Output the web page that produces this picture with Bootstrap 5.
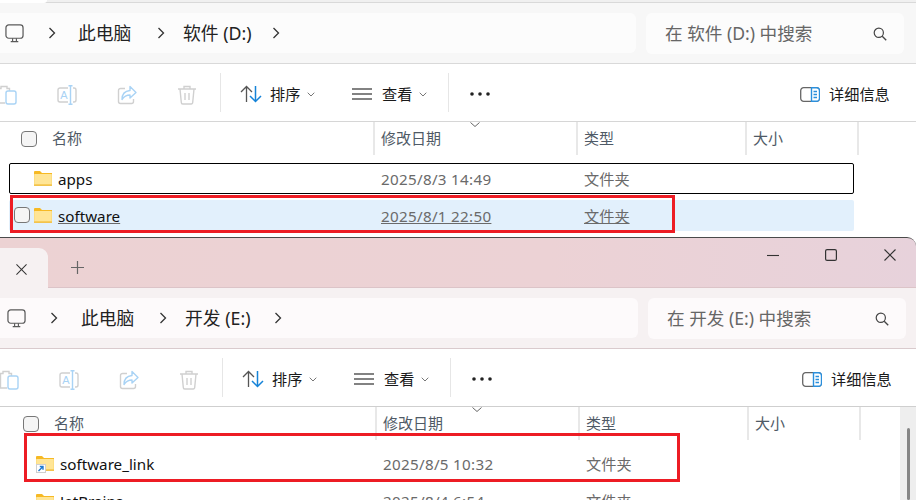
<!DOCTYPE html>
<html lang="zh-CN">
<head>
<meta charset="utf-8">
<title>文件资源管理器</title>
<link href="https://cdn.jsdelivr.net/npm/bootstrap@5.3.0/dist/css/bootstrap.min.css" rel="stylesheet">
<style>
html,body{height:500px;overflow:hidden;background:#fff;}
body{font-family:"Noto Sans","Noto Sans CJK SC",sans-serif;font-size:15px;color:#1a1a1a;width:916px;}
.xp-win{position:relative;overflow:hidden;--sh:0px;--band:#f7f7f7;--box:#fcfcfc;--line:#d9d9d9;}
.xp-a{height:237px;}
.xp-b{height:263px;--sh:2px;--band:#f6f1f2;--box:#fdfafb;--line:#d9cacd;}
.xp-top{height:3px;background:#f0f0f0;border-bottom:1px solid #d9d9d9;}
.xp-top i{display:block;width:47px;height:3px;background:#fff;border-bottom-right-radius:3px;}
.xp-tabs{height:51px;border-top:1px solid #4a4a4a;border-radius:0 9px 0 0;background:linear-gradient(90deg,#ecd2d3,#ecd2d5 60%,#e7d2db);border-bottom:1px solid #dcc4c8;}
.xp-tab{width:48px;height:40px;background:var(--band);border-radius:0 9px 0 0;margin-top:10px;padding-left:16px;}
.xp-plus{margin-left:23px;margin-top:23px;}
.xp-ctl{position:absolute;top:12px;}
.xp-band{height:61px;background:var(--band);border-bottom:1px solid var(--line);padding:10px 12px 10px 0;}
.xp-b .xp-band{padding-right:10px;}
.xp-addr{width:calc(636px + var(--sh));height:40px;background:var(--box);border-radius:0 6px 6px 0;padding-left:calc(5px + var(--sh));font-size:17.8px;color:#222;}
.xp-find{width:258px;height:41px;margin-left:10px;background:var(--box);border-radius:6px;padding:0 17px 0 19px;font-size:17.6px;color:#666;}
.xp-tools{height:58px;padding-left:var(--sh);padding-top:3px;border-bottom:1px solid #d6d6d6;background:#fff;font-size:15.2px;overflow:hidden;}
.xp-tools span{padding-top:1px;}
.xp-b .xp-tools{border-bottom-color:#cfcfcf;}
.xp-tb{width:60px;flex:none;}
.xp-tb-first{margin-left:-23px;}
.xp-div{width:1px;height:39px;background:#e6e6e6;flex:none;margin-top:-3px;}
.xp-tools .xp-div{padding:0;}
.xp-lab{width:30px;flex:none;}
.xp-head{height:33px;padding-left:var(--sh);color:#4f5a66;font-size:15px;}
.xp-hc{flex:none;height:33px;padding-left:6px;border-right:2px solid #e8e8e8;position:relative;}
.xp-h1{width:375px;padding-left:21px;}
.xp-h2{width:203px;}
.xp-h3{width:169px;}
.xp-h4{width:112px;}
.xp-check{display:block;width:16px;height:16px;flex:none;background:#f5f5f5;border:1px solid #777;border-radius:4px;}
.xp-sortmark{position:absolute;left:95px;top:0;}
.xp-rowwrap{margin-left:calc(9px + var(--sh));width:845px;}
.xp-file{display:grid;grid-template-columns:372px 203px 1fr;align-items:center;height:31px;border-radius:2px;color:#6a6a6a;font-size:15.2px;}
.xp-file > div + div,.xp-txt{padding-top:2px;}
.xp-b .xp-file > div + div,.xp-b .xp-txt{padding-top:0;}
.xp-stamp{letter-spacing:.3px;}
.xp-nm{color:#111;padding-left:25px;}
.xp-txt{margin-left:6px;}
.xp-box{outline:1.5px solid #000;outline-offset:-1.5px;height:31px;}
.xp-sel{background:#e2f0fc;text-decoration:underline;}
.xp-sel .xp-nm{padding-left:5px;}
.xp-sel .xp-check{margin-right:4px;}
.xp-mt6{margin-top:6px;}
.xp-mt8{margin-top:8px;}
.xp-mt9{margin-top:9px;}
.xp-red{position:absolute;border:3px solid #ed1c24;pointer-events:none;}
.xp-r1{left:10px;top:195px;width:665px;height:38px;}
.xp-r2{left:24px;top:196px;width:656px;height:49px;}
.xp-track{position:absolute;left:900px;top:170px;width:16px;height:93px;background:#eee;}
.xp-thumb{position:absolute;left:7px;top:21px;width:3px;height:72px;background:#868686;border-radius:2px;}
.xp-shortcut{position:relative;display:block;flex:none;width:18px;height:17px;}
</style>
</head>
<body>
<svg width="0" height="0" class="position-absolute">
<defs>
<symbol id="i-pc" viewBox="0 0 20 20"><rect x="1" y="1" width="18" height="14" rx="3" fill="none" stroke="#5a5a5a" stroke-width="1.3"/><path d="M6 18.5h8M8 15v3M12 15v3" fill="none" stroke="#5a5a5a" stroke-width="1.2"/></symbol>
<symbol id="i-gt" viewBox="0 0 8 12"><path d="M1.5 1 6.5 6l-5 5" fill="none" stroke="#333" stroke-width="1.3"/></symbol>
<symbol id="i-find" viewBox="0 0 14 14"><circle cx="5.8" cy="5.8" r="4.6" fill="none" stroke="#444" stroke-width="1.2"/><path d="m9.2 9.2 4 4" stroke="#444" stroke-width="1.3"/></symbol>
<symbol id="i-paste" viewBox="0 0 20 20"><path d="M8 18H1.5V3.5H4V1.5h6v2h2.500V6" fill="none" stroke="#d0d0d0" stroke-width="1.4"/><rect x="9" y="6" width="10" height="13" rx="2" fill="#fff" stroke="#a9d3f5" stroke-width="1.4"/></symbol>
<symbol id="i-ren" viewBox="0 0 20 20"><path d="M11 3H3A2 2 0 0 0 1 5v10a2 2 0 0 0 2 2h8M16 3h1a2 2 0 0 1 2 2v10a2 2 0 0 1-2 2h-1" fill="none" stroke="#d0d0d0" stroke-width="1.4"/><path d="M11.500.7h4M13.500.7v18.600M11.500 19.300h4" fill="none" stroke="#a9d3f5" stroke-width="1.4"/><text x="7" y="14" text-anchor="middle" font-size="11" font-family="Liberation Sans" fill="#a9d3f5">A</text></symbol>
<symbol id="i-share" viewBox="0 0 20 20"><path d="M8 3.500H3.500a2 2 0 0 0-2 2v11a2 2 0 0 0 2 2h11a2 2 0 0 0 2-2V14" fill="none" stroke="#d0d0d0" stroke-width="1.4"/><path d="M13 1.500 19 7.500l-6 5.500V10c-4 0-6 1.500-8 4.500 0-5 3-8.500 8-9z" fill="#fff" stroke="#a9d3f5" stroke-width="1.4" stroke-linejoin="round"/></symbol>
<symbol id="i-trash" viewBox="0 0 20 20"><path d="M1 4h18M7 4V1.500h6V4M3 4l1.300 13.500a1.500 1.500 0 0 0 1.500 1.500h8.400a1.500 1.500 0 0 0 1.500-1.500L17 4M8 8v7M12 8v7" fill="none" stroke="#d0d0d0" stroke-width="1.4"/></symbol>
<symbol id="i-sort" viewBox="0 0 22 18"><path d="M6.500 17V1.500M1 7l5.500-5.500L12 7" fill="none" stroke="#555" stroke-width="1.3"/><path d="M15.500 1v15.500M10 11l5.500 5.500L21 11" fill="none" stroke="#1583d8" stroke-width="1.5"/></symbol>
<symbol id="i-view" viewBox="0 0 20 12"><path d="M0 1h20M0 6h20M0 11h20" stroke="#5a5a5a" stroke-width="1.3"/></symbol>
<symbol id="i-dn" viewBox="0 0 8 5"><path d="m.7.700 3.300 3.300L7.300.700" fill="none" stroke="#777" stroke-width="1"/></symbol>
<symbol id="i-dots" viewBox="0 0 20 4"><circle cx="2" cy="2" r="1.800" fill="#222"/><circle cx="10" cy="2" r="1.800" fill="#222"/><circle cx="18" cy="2" r="1.800" fill="#222"/></symbol>
<symbol id="i-det" viewBox="0 0 20 15"><rect x=".7" y=".7" width="18.600" height="13.600" rx="3" fill="#fff" stroke="#666" stroke-width="1.300"/><path d="M11.500.7h5a3 3 0 0 1 3 3v7.600a3 3 0 0 1-3 3h-5z" fill="#fff" stroke="#2b8fdc" stroke-width="1.400"/><path d="M13.500 4.500h3.500M13.500 7.500h3.500M13.500 10.500h3.500" stroke="#2b8fdc" stroke-width="1.300"/></symbol>
<symbol id="i-x" viewBox="0 0 12 12"><path d="m.5.500 11 11m0-11-11 11" fill="none" stroke="#333" stroke-width="1.100"/></symbol>
<symbol id="i-folder" viewBox="0 0 18 15"><path d="M0 1a1 1 0 0 1 1-1h5l2 2h10v3H0z" fill="#f6b924"/><rect y="3" width="18" height="12" rx="1" fill="#fbd66e"/><rect y="3" x=".5" width="17" height="10" fill="#ffe596"/><rect y="13.500" width="18" height="1.500" fill="#f3c34d"/></symbol>
</defs>
</svg>

<div class="xp-win xp-a">
  <div class="xp-top"><i></i></div>
  <div class="xp-band d-flex">
    <div class="xp-addr d-flex align-items-center">
      <svg width="19" height="19"><use href="#i-pc"/></svg>
      <svg width="8" height="12" style="margin-left:24px"><use href="#i-gt"/></svg>
      <span class="text-nowrap" style="margin-left:22px;width:54px">此电脑</span>
      <svg width="8" height="12" style="margin-left:25px"><use href="#i-gt"/></svg>
      <span class="text-nowrap" style="margin-left:18px;width:68px">软件 (D:)</span>
      <svg width="8" height="12" style="margin-left:21px"><use href="#i-gt"/></svg>
    </div>
    <div class="xp-find d-flex align-items-center justify-content-between">
      <span class="text-nowrap">在 软件 (D:) 中搜索</span>
      <svg width="14" height="14"><use href="#i-find"/></svg>
    </div>
  </div>
  <div class="xp-tools d-flex align-items-center">
    <div class="xp-tb xp-tb-first text-center"><svg width="20" height="20"><use href="#i-paste"/></svg></div>
    <div class="xp-tb text-center"><svg width="20" height="20"><use href="#i-ren"/></svg></div>
    <div class="xp-tb text-center"><svg width="20" height="20"><use href="#i-share"/></svg></div>
    <div class="xp-tb text-center"><svg width="20" height="20"><use href="#i-trash"/></svg></div>
    <span class="xp-div" style="margin-left:3px"></span>
    <svg width="22" height="18" style="margin-left:19px"><use href="#i-sort"/></svg>
    <span class="xp-lab text-nowrap ms-2">排序</span>
    <svg width="8" height="5" style="margin-left:7px"><use href="#i-dn"/></svg>
    <svg width="20" height="12" style="margin-left:37px"><use href="#i-view"/></svg>
    <span class="xp-lab text-nowrap" style="margin-left:10px">查看</span>
    <svg width="8" height="5" style="margin-left:7px"><use href="#i-dn"/></svg>
    <span class="xp-div" style="margin-left:21px"></span>
    <svg width="20" height="4" style="margin-left:21px"><use href="#i-dots"/></svg>
    <svg width="20" height="15" style="margin-left:310px"><use href="#i-det"/></svg>
    <span class="text-nowrap" style="margin-left:9px">详细信息</span>
  </div>
  <div class="xp-head d-flex">
    <div class="xp-hc xp-h1 d-flex align-items-center"><span class="xp-check"></span><span style="margin-left:15px">名称</span></div>
    <div class="xp-hc xp-h2 d-flex align-items-center"><span class="text-nowrap">修改日期</span><svg class="xp-sortmark" width="10" height="5"><path d="m.5.500 4.500 4 4.500-4" fill="none" stroke="#666"/></svg></div>
    <div class="xp-hc xp-h3 d-flex align-items-center">类型</div>
    <div class="xp-hc xp-h4 d-flex align-items-center">大小</div>
  </div>
  <div class="xp-rowwrap">
    <div class="xp-file xp-box xp-mt8">
      <div class="xp-nm d-flex align-items-center"><svg width="18" height="15"><use href="#i-folder"/></svg><span class="xp-txt">apps</span></div>
      <div class="xp-stamp">2025/8/3 14:49</div><div>文件夹</div>
    </div>
    <div class="xp-file xp-sel xp-mt6">
      <div class="xp-nm d-flex align-items-center"><span class="xp-check"></span><svg width="18" height="15"><use href="#i-folder"/></svg><span class="xp-txt">software</span></div>
      <div class="xp-stamp">2025/8/1 22:50</div><div>文件夹</div>
    </div>
  </div>
  <div class="xp-red xp-r1"></div>
</div>

<div class="xp-win xp-b">
  <div class="xp-tabs d-flex">
    <div class="xp-tab"><svg width="11" height="11" class="mt-3"><use href="#i-x"/></svg></div>
    <svg class="xp-plus" width="13" height="13"><path d="M6.500 0v13M0 6.500h13" stroke="#666" stroke-width="1.200"/></svg>
    <svg class="xp-ctl" style="left:767px" width="12" height="12"><path d="M0 6.500h12" stroke="#333" stroke-width="1.100"/></svg>
    <svg class="xp-ctl" style="left:825px" width="12" height="12"><rect x=".6" y=".6" width="10.800" height="10.800" rx="1.500" fill="none" stroke="#333" stroke-width="1.200"/></svg>
    <svg class="xp-ctl" style="left:884px" width="12" height="12"><use href="#i-x"/></svg>
  </div>
  <div class="xp-band d-flex">
    <div class="xp-addr d-flex align-items-center">
      <svg width="19" height="19"><use href="#i-pc"/></svg>
      <svg width="8" height="12" style="margin-left:24px"><use href="#i-gt"/></svg>
      <span class="text-nowrap" style="margin-left:23px;width:53px">此电脑</span>
      <svg width="8" height="12" style="margin-left:25px"><use href="#i-gt"/></svg>
      <span class="text-nowrap" style="margin-left:18px;width:65px">开发 (E:)</span>
      <svg width="8" height="12" style="margin-left:24px"><use href="#i-gt"/></svg>
    </div>
    <div class="xp-find d-flex align-items-center justify-content-between">
      <span class="text-nowrap">在 开发 (E:) 中搜索</span>
      <svg width="14" height="14"><use href="#i-find"/></svg>
    </div>
  </div>
  <div class="xp-tools d-flex align-items-center">
    <div class="xp-tb xp-tb-first text-center"><svg width="20" height="20"><use href="#i-paste"/></svg></div>
    <div class="xp-tb text-center"><svg width="20" height="20"><use href="#i-ren"/></svg></div>
    <div class="xp-tb text-center"><svg width="20" height="20"><use href="#i-share"/></svg></div>
    <div class="xp-tb text-center"><svg width="20" height="20"><use href="#i-trash"/></svg></div>
    <span class="xp-div" style="margin-left:3px"></span>
    <svg width="22" height="18" style="margin-left:19px"><use href="#i-sort"/></svg>
    <span class="xp-lab text-nowrap ms-2">排序</span>
    <svg width="8" height="5" style="margin-left:7px"><use href="#i-dn"/></svg>
    <svg width="20" height="12" style="margin-left:37px"><use href="#i-view"/></svg>
    <span class="xp-lab text-nowrap" style="margin-left:10px">查看</span>
    <svg width="8" height="5" style="margin-left:7px"><use href="#i-dn"/></svg>
    <span class="xp-div" style="margin-left:21px"></span>
    <svg width="20" height="4" style="margin-left:21px"><use href="#i-dots"/></svg>
    <svg width="20" height="15" style="margin-left:310px"><use href="#i-det"/></svg>
    <span class="text-nowrap" style="margin-left:9px">详细信息</span>
  </div>
  <div class="xp-head d-flex">
    <div class="xp-hc xp-h1 d-flex align-items-center"><span class="xp-check"></span><span style="margin-left:15px">名称</span></div>
    <div class="xp-hc xp-h2 d-flex align-items-center"><span class="text-nowrap">修改日期</span><svg class="xp-sortmark" width="10" height="5"><path d="m.5.500 4.500 4 4.500-4" fill="none" stroke="#666"/></svg></div>
    <div class="xp-hc xp-h3 d-flex align-items-center">类型</div>
    <div class="xp-hc xp-h4 d-flex align-items-center">大小</div>
  </div>
  <div class="xp-rowwrap">
    <div class="xp-file xp-mt9">
      <div class="xp-nm d-flex align-items-center">
        <span class="xp-shortcut"><svg class="d-block" width="18" height="15"><use href="#i-folder"/></svg><svg class="position-absolute bottom-0 start-0" width="10" height="9"><rect x=".5" y=".5" width="9" height="8" fill="#fff" stroke="#cfcfcf"/><path d="M2.500 7 7 2.500M3.800 2.500H7V5.700" fill="none" stroke="#1c78d0" stroke-width="1.400"/></svg></span>
        <span class="xp-txt">software_link</span>
      </div>
      <div class="xp-stamp">2025/8/5 10:32</div><div>文件夹</div>
    </div>
    <div class="xp-file xp-mt6">
      <div class="xp-nm d-flex align-items-center"><svg width="18" height="15"><use href="#i-folder"/></svg><span class="xp-txt">JetBrains</span></div>
      <div class="xp-stamp">2025/8/4 6:54</div><div>文件夹</div>
    </div>
  </div>
  <div class="xp-red xp-r2"></div>
  <div class="xp-track"><div class="xp-thumb"></div></div>
</div>
<script src="https://cdn.jsdelivr.net/npm/bootstrap@5.3.0/dist/js/bootstrap.bundle.min.js"></script>
</body>
</html>
